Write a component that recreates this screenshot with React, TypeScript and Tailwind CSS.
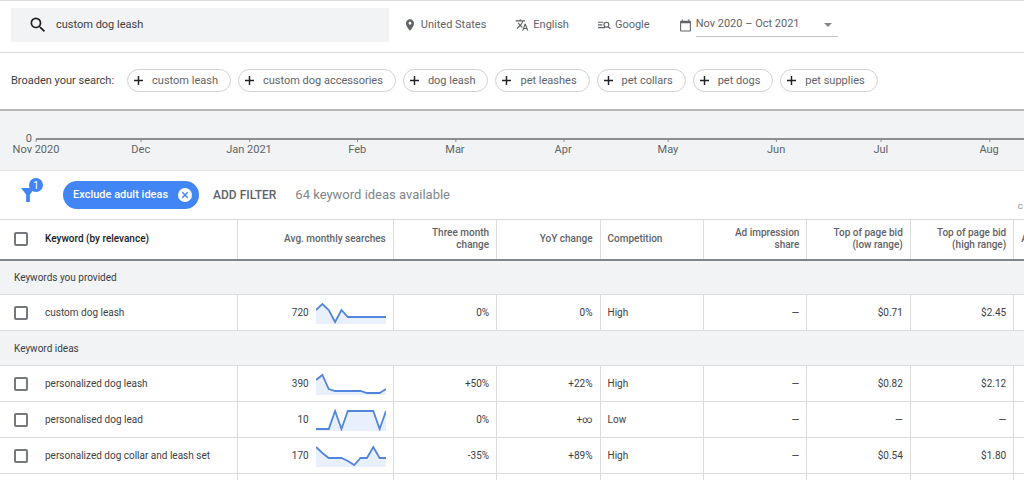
import React from 'react'

interface IRow {
    keyword: string;
    searches: string;
    trend: number[];
    threeMonth: string;
    yoy: string;
    competition: string;
    low: string;
    high: string;
}

const suggestions = [
    "custom leash",
    "custom dog accessories",
    "dog leash",
    "pet leashes",
    "pet collars",
    "pet dogs",
    "pet supplies"
]

const months = ["Nov 2020", "Dec", "Jan 2021", "Feb", "Mar", "Apr", "May", "Jun", "Jul", "Aug"]

// day offset of each tick from the first month
const tickDays = [0, 30, 61, 92, 120, 151, 181, 212, 242, 273]
const visibleDays = 283

const provided: IRow[] = [
    {
        keyword: "custom dog leash",
        searches: "720",
        trend: [8, 2, 8, 20, 8, 15, 15, 15, 15, 15, 15, 15],
        threeMonth: "0%",
        yoy: "0%",
        competition: "High",
        low: "$0.71",
        high: "$2.45"
    }
]

const ideas: IRow[] = [
    {
        keyword: "personalized dog leash",
        searches: "390",
        trend: [7, 2, 16, 18, 18, 18, 18, 18, 20, 20, 20, 16],
        threeMonth: "+50%",
        yoy: "+22%",
        competition: "High",
        low: "$0.82",
        high: "$2.12"
    },
    {
        keyword: "personalised dog lead",
        searches: "10",
        trend: [20, 20, 20, 2, 20, 2, 2, 2, 2, 2, 20, 2],
        threeMonth: "0%",
        yoy: "+∞",
        competition: "Low",
        low: "—",
        high: "—"
    },
    {
        keyword: "personalized dog collar and leash set",
        searches: "170",
        trend: [2, 8, 13, 13, 13, 16, 20, 13, 13, 2, 13, 13],
        threeMonth: "-35%",
        yoy: "+89%",
        competition: "High",
        low: "$0.54",
        high: "$1.80"
    }
]

const cell = "border-r border-[#dadce0] px-[7px]"

const Icon = ({ d, className }: { d: string; className: string }) => (
    <svg viewBox="0 0 24 24" fill="currentColor" className={className} aria-hidden="true">
        <path d={d} />
    </svg>
)

const Sparkline = ({ values }: { values: number[] }) => {
    const points = values.map((y, i) => `${(i * 70) / (values.length - 1)},${y}`).join(" ")
    return (
        <svg viewBox="0 0 70 22" className="h-[22px] w-[70px] shrink-0" aria-hidden="true">
            <polygon points={`0,22 ${points} 70,22`} fill="#e8f0fe" />
            <polyline points={points} fill="none" stroke="#5186dc" strokeWidth="1.8" />
        </svg>
    )
}

const Checkbox = ({ label }: { label: string }) => (
    <input
        type="checkbox"
        aria-label={label}
        className="block size-[14px] shrink-0 appearance-none rounded-[2px] border-2 border-[#75787c] bg-white"
    />
)

const SectionRow = ({ title }: { title: string }) => (
    <tr className="h-[35px] border-b border-[#dadce0] bg-[#f1f3f4]">
        <th colSpan={9} scope="colgroup" className="px-[14px] pt-px text-left font-normal">{title}</th>
    </tr>
)

const KeywordRow = ({ row }: { row: IRow }) => (
    <tr className="h-9 border-b border-[#dadce0] text-right">
        <td className={`${cell} text-left`}>
            <div className="flex items-center gap-[17px] pl-[7px]">
                <Checkbox label={row.keyword} />
                {row.keyword}
            </div>
        </td>
        <td className={cell}>
            <div className="flex items-center justify-end gap-[7px]">
                {row.searches}
                <Sparkline values={row.trend} />
            </div>
        </td>
        <td className={cell}>{row.threeMonth}</td>
        <td className={cell}>{row.yoy}</td>
        <td className={`${cell} text-left`}>{row.competition}</td>
        <td className={cell}>—</td>
        <td className={cell}>{row.low}</td>
        <td className={cell}>{row.high}</td>
        <td></td>
    </tr>
)

const SearchBar = () => (
    <header className="flex items-center border-b border-[#dadce0] pt-[7px] pb-[10px] pl-[11px] text-[11px] text-[#5f6368]">
        <label className="flex h-[34px] w-[37.3%] items-center gap-2 bg-[#f1f3f4] pl-[17px] text-[#202124]">
            <Icon
                className="size-[20px] shrink-0"
                d="M15.5 14h-.79l-.28-.27A6.471 6.471 0 0 0 16 9.5 6.5 6.5 0 1 0 9.5 16c1.61 0 3.09-.59 4.23-1.57l.27.28v.79l5 4.99L20.49 19l-4.99-5zm-6 0C7.01 14 5 11.99 5 9.5S7.01 5 9.5 5 14 7.01 14 9.5 11.99 14 9.5 14z"
            />
            <input type="text" aria-label="Keywords" defaultValue="custom dog leash" className="min-w-0 flex-1 bg-transparent text-[11px] text-[#3c4043] outline-none" />
        </label>
        <button className="ml-[14px] flex items-center gap-1">
            <Icon className="size-[14px]" d="M12 2C8.13 2 5 5.13 5 9c0 5.25 7 13 7 13s7-7.75 7-13c0-3.87-3.13-7-7-7zm0 9.5a2.5 2.5 0 0 1 0-5 2.5 2.5 0 0 1 0 5z" />
            United States
        </button>
        <button className="ml-[29px] flex items-center gap-1">
            <Icon className="size-[14px]" d="M12.87 15.07l-2.54-2.51.03-.03A17.52 17.52 0 0 0 14.07 6H17V4h-7V2H8v2H1v1.99h11.17C11.5 7.92 10.44 9.75 9 11.35 8.07 10.32 7.3 9.19 6.69 8h-2c.73 1.63 1.73 3.17 2.98 4.56l-5.09 5.02L4 19l5-5 3.11 3.11.76-2.04zM18.5 10h-2L12 22h2l1.12-3h4.75L21 22h2l-4.5-12zm-2.62 7l1.62-4.33L19.12 17h-3.24z" />
            English
        </button>
        <button className="ml-[29px] flex items-center gap-1">
            <svg viewBox="0 0 24 24" fill="none" stroke="currentColor" strokeWidth="2.2" className="size-[13px]" aria-hidden="true">
                <path d="M0 6h10M0 11h8M0 16h13M18 14l5 4" />
                <circle cx="15.5" cy="10.5" r="4.5" />
            </svg>
            Google
        </button>
        <button className="ml-[29px] flex items-center gap-1">
            <Icon className="size-[13px]" d="M20 3h-1V1h-2v2H7V1H5v2H4c-1.1 0-2 .9-2 2v16c0 1.1.9 2 2 2h16c1.1 0 2-.9 2-2V5c0-1.1-.9-2-2-2zm0 18H4V8h16v13z" />
            <span className="flex h-[23px] w-[142px] items-center justify-between border-b border-[#c4c7ca] pr-[6px]">
                Nov 2020 – Oct 2021
                <svg viewBox="0 0 8 4" className="h-1 w-2" fill="#80868b" aria-hidden="true"><path d="M0 0h8L4 4z" /></svg>
            </span>
        </button>
    </header>
)

const Suggestions = () => (
    <div className="flex items-center gap-[7px] border-b-2 border-[#b5b6b8] px-[11px] pt-4 pb-[17px] text-[11px] text-[#3c4043]">
        <span className="mr-[6px] pt-[2px] whitespace-nowrap">Broaden your search:</span>
        {suggestions.map((item) => (
            <button key={item} className="flex h-[23px] items-center gap-[9px] rounded-full border border-[#d0d2d5] pr-[12px] pl-[6px] whitespace-nowrap text-[#5f6368]">
                <svg viewBox="0 0 10 10" className="size-[9px]" stroke="#202124" strokeWidth="1.6" aria-hidden="true">
                    <path d="M5 0v10M0 5h10" />
                </svg>
                <span className="pt-[2px]">{item}</span>
            </button>
        ))}
    </div>
)

const TimeAxis = () => (
    <div className="border-b border-[#e0e2e4] bg-[#f1f3f4] pt-[27px] pb-[13px] text-[11px] leading-[15px] text-[#5f6368]">
        <div className="flex h-1 items-start">
            <span className="w-9 pr-1 text-right leading-[2px]">0</span>
            <div className="h-[2px] flex-1 bg-[#8b8d90]"></div>
        </div>
        <div className="relative ml-9 h-[15px]">
            {months.map((month, i) => (
                <span
                    key={month}
                    className="absolute top-0 -translate-x-1/2 whitespace-nowrap before:absolute before:-top-[3px] before:left-1/2 before:h-[3px] before:w-px before:bg-[#8b8d90]"
                    style={{ left: `${(tickDays[i] / visibleDays) * 100}%` }}
                >
                    {month}
                </span>
            ))}
        </div>
    </div>
)

const FilterBar = () => (
    <div className="flex h-[48px] items-center overflow-hidden pl-[21px]">
        <button aria-label="Filters" className="relative text-[#4285f4]">
            <svg viewBox="0 0 15 15" className="size-[14px]" fill="currentColor" aria-hidden="true">
                <path d="M0 0h15L9.5 7v8h-4V7z" />
            </svg>
            <span className="absolute -top-[10px] left-2 flex size-[14px] items-center justify-center rounded-full bg-[#4285f4] text-[10px] text-white">1</span>
        </button>
        <button className="ml-7 flex h-7 items-center gap-[10px] rounded-full bg-[#4285f4] pr-[7px] pl-[10px] text-[11px] font-medium text-white">
            Exclude adult ideas
            <svg viewBox="0 0 14 14" className="size-[14px]" aria-hidden="true">
                <circle cx="7" cy="7" r="7" fill="#fff" />
                <path d="M4.3 4.3l5.4 5.4M9.7 4.3l-5.4 5.4" stroke="#4285f4" strokeWidth="1.5" />
            </svg>
        </button>
        <button className="ml-[14px] text-[12px] font-medium text-[#5f6368]">ADD FILTER</button>
        <span className="ml-[19px] text-[13px] text-[#80868b]">64 keyword ideas available</span>
        <button className="mt-6 mr-px ml-auto text-[8px] text-[#80868b]">C</button>
    </div>
)

const KeywordTable = () => (
    <table className="w-full table-fixed border-collapse text-[10px] leading-[12px] text-[#3c4043]">
        <colgroup>
            <col className="w-[23.2%]" />
            <col className="w-[15.2%]" />
            <col className="w-[10.1%]" />
            <col className="w-[10.1%]" />
            <col className="w-[10.1%]" />
            <col className="w-[10.1%]" />
            <col className="w-[10.1%]" />
            <col className="w-[10.1%]" />
            <col />
        </colgroup>
        <thead>
            <tr className="h-[40px] border-t border-b-2 border-t-[#dadce0] border-b-[#80868b] text-right text-[#5f6368] [&>th]:font-medium">
                <th scope="col" className={`${cell} text-left text-[#202124]`}>
                    <div className="flex items-center gap-[17px] pl-[7px]">
                        <Checkbox label="Select all keywords" />
                        Keyword (by relevance)
                    </div>
                </th>
                <th scope="col" className={cell}>Avg. monthly searches</th>
                <th scope="col" className={cell}>Three month<br />change</th>
                <th scope="col" className={cell}>YoY change</th>
                <th scope="col" className={`${cell} text-left`}>Competition</th>
                <th scope="col" className={cell}>Ad impression<br />share</th>
                <th scope="col" className={cell}>Top of page bid<br />(low range)</th>
                <th scope="col" className={cell}>Top of page bid<br />(high range)</th>
                <th scope="col" className="overflow-hidden pl-[7px] text-left">A</th>
            </tr>
        </thead>
        <tbody>
            <SectionRow title="Keywords you provided" />
            {provided.map((row) => <KeywordRow key={row.keyword} row={row} />)}
            <SectionRow title="Keyword ideas" />
            {ideas.map((row) => <KeywordRow key={row.keyword} row={row} />)}
            <tr className="h-[6px]" aria-hidden="true">
                <td className={cell}></td>
                <td className={cell}></td>
                <td className={cell}></td>
                <td className={cell}></td>
                <td className={cell}></td>
                <td className={cell}></td>
                <td className={cell}></td>
                <td className={cell}></td>
                <td></td>
            </tr>
        </tbody>
    </table>
)

const App = () => {
  return (
    <main className="overflow-hidden border-t border-[#dadce0] bg-white font-[Roboto,sans-serif]">
        <SearchBar />
        <Suggestions />
        <TimeAxis />
        <FilterBar />
        <KeywordTable />
    </main>
  )
}

export default App
